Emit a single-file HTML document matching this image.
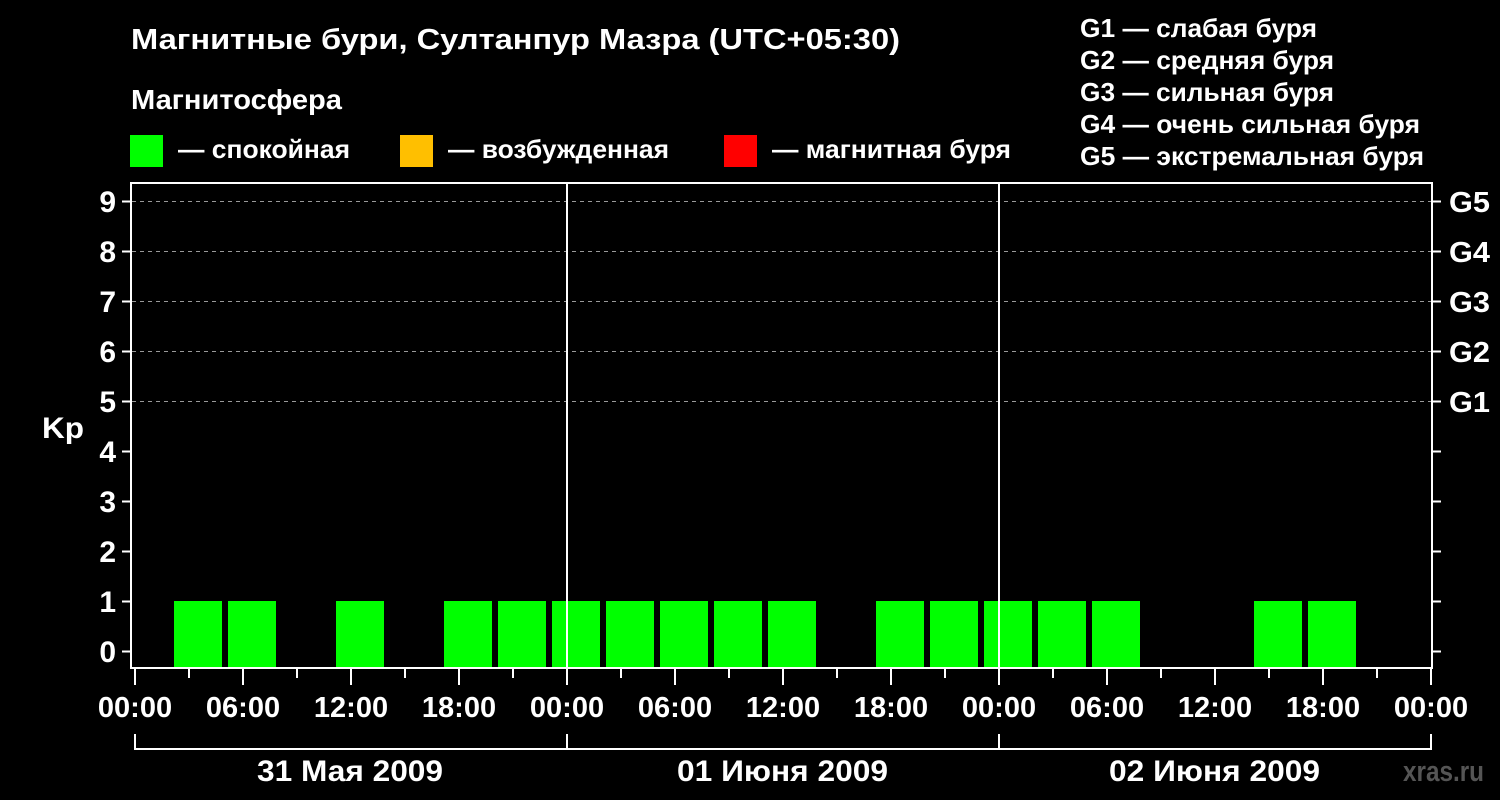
<!DOCTYPE html>
<html><head><meta charset="utf-8"><style>html,body{margin:0;padding:0;background:#000;}svg{display:block}</style></head>
<body>
<svg width="1500" height="800" xmlns="http://www.w3.org/2000/svg" font-family="Liberation Sans, sans-serif" font-weight="bold" fill="#fff">
<rect width="1500" height="800" fill="#000"/>
<text x="131" y="49" font-size="29" textLength="769" lengthAdjust="spacingAndGlyphs">Магнитные бури, Султанпур Мазра (UTC+05:30)</text>
<text x="131" y="109" font-size="28" textLength="211" lengthAdjust="spacingAndGlyphs">Магнитосфера</text>
<rect x="130" y="135" width="33" height="32" fill="#00ff00"/>
<text x="178" y="158" font-size="26" textLength="172" lengthAdjust="spacingAndGlyphs">— спокойная</text>
<rect x="400" y="135" width="33" height="32" fill="#ffbf00"/>
<text x="448" y="158" font-size="26" textLength="221" lengthAdjust="spacingAndGlyphs">— возбужденная</text>
<rect x="724" y="135" width="33" height="32" fill="#ff0000"/>
<text x="772" y="158" font-size="26" textLength="239" lengthAdjust="spacingAndGlyphs">— магнитная буря</text>
<g font-size="26">
<text x="1080" y="37" textLength="237" lengthAdjust="spacingAndGlyphs">G1 — слабая буря</text>
<text x="1080" y="69" textLength="254" lengthAdjust="spacingAndGlyphs">G2 — средняя буря</text>
<text x="1080" y="101" textLength="254" lengthAdjust="spacingAndGlyphs">G3 — сильная буря</text>
<text x="1080" y="133" textLength="340" lengthAdjust="spacingAndGlyphs">G4 — очень сильная буря</text>
<text x="1080" y="165" textLength="344" lengthAdjust="spacingAndGlyphs">G5 — экстремальная буря</text>
</g>
<g stroke="#999" stroke-width="1" stroke-dasharray="4,4">
<line x1="132" y1="201.5" x2="1431" y2="201.5"/>
<line x1="132" y1="251.5" x2="1431" y2="251.5"/>
<line x1="132" y1="301.5" x2="1431" y2="301.5"/>
<line x1="132" y1="351.5" x2="1431" y2="351.5"/>
<line x1="132" y1="401.5" x2="1431" y2="401.5"/>
</g>
<g fill="#00ff00">
<rect x="174" y="601" width="48" height="66"/>
<rect x="228" y="601" width="48" height="66"/>
<rect x="336" y="601" width="48" height="66"/>
<rect x="444" y="601" width="48" height="66"/>
<rect x="498" y="601" width="48" height="66"/>
<rect x="552" y="601" width="48" height="66"/>
<rect x="606" y="601" width="48" height="66"/>
<rect x="660" y="601" width="48" height="66"/>
<rect x="714" y="601" width="48" height="66"/>
<rect x="768" y="601" width="48" height="66"/>
<rect x="876" y="601" width="48" height="66"/>
<rect x="930" y="601" width="48" height="66"/>
<rect x="984" y="601" width="48" height="66"/>
<rect x="1038" y="601" width="48" height="66"/>
<rect x="1092" y="601" width="48" height="66"/>
<rect x="1254" y="601" width="48" height="66"/>
<rect x="1308" y="601" width="48" height="66"/>
</g>
<g stroke="#fff" stroke-width="2" fill="none">
<rect x="131" y="183" width="1301" height="485"/>
<line x1="567" y1="183" x2="567" y2="668"/>
<line x1="999" y1="183" x2="999" y2="668"/>
<path d="M122 201.5h9M122 251.5h9M122 301.5h9M122 351.5h9M122 401.5h9M122 451.5h9M122 501.5h9M122 551.5h9M122 601.5h9M122 651.5h9"/>
<path d="M1432 201.5h9M1432 251.5h9M1432 301.5h9M1432 351.5h9M1432 401.5h9M1432 451.5h9M1432 501.5h9M1432 551.5h9M1432 601.5h9M1432 651.5h9"/>
<path d="M135 668v17M189 668v10M243 668v17M297 668v10M351 668v17M405 668v10M459 668v17M513 668v10M567 668v17M621 668v10M675 668v17M729 668v10M783 668v17M837 668v10M891 668v17M945 668v10M999 668v17M1053 668v10M1107 668v17M1161 668v10M1215 668v17M1269 668v10M1323 668v17M1377 668v10M1431 668v17"/>
<path d="M135 734v15h1296v-15M567 734v15M999 734v15"/>
</g>
<g font-size="30" text-anchor="end">
<text x="116" y="212">9</text><text x="116" y="262">8</text><text x="116" y="312">7</text><text x="116" y="362">6</text><text x="116" y="412">5</text><text x="116" y="462">4</text><text x="116" y="512">3</text><text x="116" y="562">2</text><text x="116" y="612">1</text><text x="116" y="662">0</text>
</g>
<text x="42" y="438" font-size="30" textLength="42" lengthAdjust="spacingAndGlyphs">Kp</text>
<g font-size="29">
<text x="1449" y="212" textLength="41" lengthAdjust="spacingAndGlyphs">G5</text><text x="1449" y="262" textLength="41" lengthAdjust="spacingAndGlyphs">G4</text><text x="1449" y="312" textLength="41" lengthAdjust="spacingAndGlyphs">G3</text><text x="1449" y="362" textLength="41" lengthAdjust="spacingAndGlyphs">G2</text><text x="1449" y="412" textLength="41" lengthAdjust="spacingAndGlyphs">G1</text>
</g>
<g font-size="29" text-anchor="middle">
<text x="135" y="717">00:00</text><text x="243" y="717">06:00</text><text x="351" y="717">12:00</text><text x="459" y="717">18:00</text>
<text x="567" y="717">00:00</text><text x="675" y="717">06:00</text><text x="783" y="717">12:00</text><text x="891" y="717">18:00</text>
<text x="999" y="717">00:00</text><text x="1107" y="717">06:00</text><text x="1215" y="717">12:00</text><text x="1323" y="717">18:00</text>
<text x="1431" y="717">00:00</text>
</g>
<g font-size="30">
<text x="257" y="781" textLength="186" lengthAdjust="spacingAndGlyphs">31 Мая 2009</text>
<text x="677" y="781" textLength="211" lengthAdjust="spacingAndGlyphs">01 Июня 2009</text>
<text x="1109" y="781" textLength="211" lengthAdjust="spacingAndGlyphs">02 Июня 2009</text>
</g>
<text x="1403" y="781" font-size="29" textLength="81" lengthAdjust="spacingAndGlyphs" fill="#555">xras.ru</text>
</svg>
</body></html>
